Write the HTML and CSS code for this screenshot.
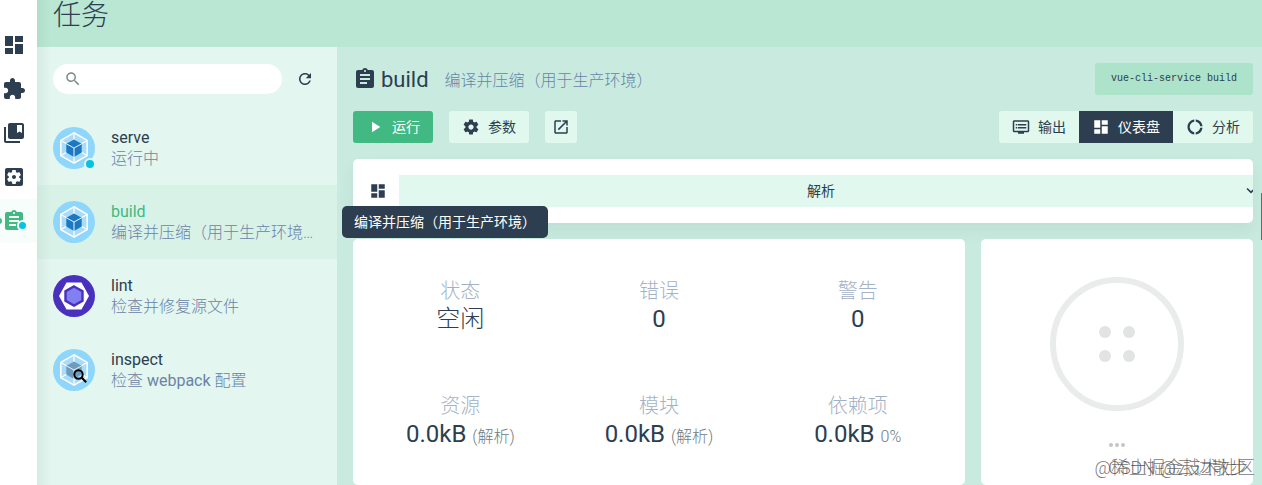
FILE: index.html
```html
<!DOCTYPE html>
<html lang="zh-CN">
<head>
    <meta charset="UTF-8">
    <meta name="viewport" content="width=device-width, initial-scale=1.0">
    <title>任务</title>
    <link rel="stylesheet" href="styles.css">
</head>
<body>
    <!-- icon sprites -->
    <svg class="sprites" aria-hidden="true">
        <symbol id="i-dashboard" viewBox="0 0 24 24"><path d="M3 13h8V3H3v10zm0 8h8v-6H3v6zm10 0h8V11h-8v10zm0-18v6h8V3h-8z"/></symbol>
        <symbol id="i-extension" viewBox="0 0 24 24"><path d="M20.5 11H19V7c0-1.1-.9-2-2-2h-4V3.5C13 2.12 11.88 1 10.5 1S8 2.12 8 3.5V5H4c-1.1 0-1.99.9-1.99 2v3.8H3.5c1.49 0 2.7 1.21 2.7 2.7s-1.21 2.7-2.7 2.7H2V20c0 1.1.9 2 2 2h3.8v-1.5c0-1.49 1.21-2.7 2.7-2.7 1.49 0 2.7 1.21 2.7 2.7V22H17c1.1 0 2-.9 2-2v-4h1.5c1.38 0 2.5-1.12 2.5-2.5S21.88 11 20.5 11z"/></symbol>
        <symbol id="i-collections" viewBox="0 0 24 24"><path d="M4 6H2v14c0 1.1.9 2 2 2h14v-2H4V6z"/><path d="M20 2H8c-1.1 0-2 .9-2 2v12c0 1.1.9 2 2 2h12c1.1 0 2-.9 2-2V4c0-1.1-.9-2-2-2zm0 10l-2.5-1.5L15 12V4h5v8z"/></symbol>
        <symbol id="i-config" viewBox="0 0 24 24"><path d="M12 10c-1.1 0-2 .9-2 2s.9 2 2 2 2-.9 2-2-.9-2-2-2zm7-7H5c-1.11 0-2 .9-2 2v14c0 1.1.89 2 2 2h14c1.11 0 2-.9 2-2V5c0-1.1-.89-2-2-2zm-1.75 9c0 .23-.02.46-.05.68l1.48 1.16c.13.11.17.3.08.45l-1.4 2.42c-.09.15-.27.21-.43.15l-1.74-.7c-.36.28-.76.51-1.18.69l-.26 1.85c-.03.17-.18.3-.35.3h-2.8c-.17 0-.32-.13-.35-.29l-.26-1.85c-.43-.18-.82-.41-1.18-.69l-1.74.7c-.16.06-.34 0-.43-.15l-1.4-2.42c-.09-.15-.05-.34.08-.45l1.48-1.16c-.03-.23-.05-.46-.05-.69 0-.23.02-.46.05-.68l-1.48-1.16c-.13-.11-.17-.3-.08-.45l1.4-2.42c.09-.15.27-.21.43-.15l1.74.7c.36-.28.76-.51 1.18-.69l.26-1.85c.03-.17.18-.3.35-.3h2.8c.17 0 .32.13.35.29l.26 1.85c.43.18.82.41 1.18.69l1.74-.7c.16-.06.34 0 .43.15l1.4 2.42c.09.15.05.34-.08.45l-1.48 1.16c.03.23.05.46.05.69z"/></symbol>
        <symbol id="i-assignment" viewBox="0 0 24 24"><path d="M19 3h-4.18C14.4 1.84 13.3 1 12 1c-1.3 0-2.4.84-2.82 2H5c-1.1 0-2 .9-2 2v14c0 1.1.9 2 2 2h14c1.1 0 2-.9 2-2V5c0-1.1-.9-2-2-2zm-7 0c.55 0 1 .45 1 1s-.45 1-1 1-1-.45-1-1 .45-1 1-1zm2 14H7v-2h7v2zm3-4H7v-2h10v2zm0-4H7V7h10v2z"/></symbol>
        <symbol id="i-search" viewBox="0 0 24 24"><path d="M15.5 14h-.79l-.28-.27C15.41 12.59 16 11.11 16 9.5 16 5.91 13.09 3 9.5 3S3 5.91 3 9.5 5.91 16 9.5 16c1.61 0 3.09-.59 4.23-1.57l.27.28v.79l5 4.99L20.49 19l-4.99-5zm-6 0C7.01 14 5 11.99 5 9.5S7.01 5 9.5 5 14 7.01 14 9.5 11.99 14 9.5 14z"/></symbol>
        <symbol id="i-refresh" viewBox="0 0 24 24"><path d="M17.65 6.35C16.2 4.9 14.21 4 12 4c-4.42 0-7.99 3.58-7.99 8s3.57 8 7.99 8c3.73 0 6.84-2.55 7.73-6h-2.08c-.82 2.33-3.04 4-5.65 4-3.31 0-6-2.69-6-6s2.69-6 6-6c1.66 0 3.14.69 4.22 1.78L13 11h7V4l-2.35 2.35z"/></symbol>
        <symbol id="i-play" viewBox="0 0 24 24"><path d="M8 5v14l11-7z"/></symbol>
        <symbol id="i-settings" viewBox="0 0 24 24"><path d="M19.43 12.98c.04-.32.07-.64.07-.98s-.03-.66-.07-.98l2.11-1.65c.19-.15.24-.42.12-.64l-2-3.46c-.12-.22-.39-.3-.61-.22l-2.49 1c-.52-.4-1.08-.73-1.69-.98l-.38-2.65C14.46 2.18 14.25 2 14 2h-4c-.25 0-.46.18-.49.42l-.38 2.65c-.61.25-1.17.59-1.69.98l-2.49-1c-.23-.09-.49 0-.61.22l-2 3.46c-.13.22-.07.49.12.64l2.11 1.65c-.04.32-.07.65-.07.98s.03.66.07.98l-2.11 1.65c-.19.15-.24.42-.12.64l2 3.46c.12.22.39.3.61.22l2.49-1c.52.4 1.08.73 1.69.98l.38 2.65c.03.24.24.42.49.42h4c.25 0 .46-.18.49-.42l.38-2.65c.61-.25 1.17-.59 1.69-.98l2.49 1c.23.09.49 0 .61-.22l2-3.46c.12-.22.07-.49-.12-.64l-2.11-1.65zM12 15.5c-1.93 0-3.5-1.57-3.5-3.5s1.57-3.5 3.5-3.5 3.5 1.57 3.5 3.5-1.57 3.5-3.5 3.5z"/></symbol>
        <symbol id="i-open" viewBox="0 0 24 24"><path d="M19 19H5V5h7V3H5c-1.11 0-2 .9-2 2v14c0 1.1.89 2 2 2h14c1.1 0 2-.9 2-2v-7h-2v7zM14 3v2h3.59l-9.83 9.83 1.41 1.41L19 6.41V10h2V3h-7z"/></symbol>
        <symbol id="i-output" viewBox="0 0 24 24"><path d="M21 3H3c-1.1 0-2 .9-2 2v12c0 1.1.9 2 2 2h5v2h8v-2h5c1.1 0 1.99-.9 1.99-2L23 5c0-1.1-.9-2-2-2zm0 14H3V5h18v12zm-2-9H8v2h11V8zm0 4H8v2h11v-2zM7 8H5v2h2V8zm0 4H5v2h2v-2z"/></symbol>
        <symbol id="i-donut" viewBox="0 0 24 24"><path d="M11 5.08V2c-5 .5-9 4.81-9 10s4 9.5 9 10v-3.08c-3-.48-6-3.4-6-6.92s3-6.44 6-6.92zM18.97 11H22c-.47-5-4-8.53-9-9v3.08C16 5.51 18.54 8 18.97 11zM13 18.92V22c5-.47 8.53-4 9-9h-3.03c-.43 3-2.97 5.49-5.97 5.92z"/></symbol>
        <symbol id="i-down" viewBox="0 0 24 24"><path d="M7.41 7.84L12 12.42l4.59-4.58L18 9.25l-6 6-6-6z"/></symbol>
        <symbol id="i-webpack" viewBox="0 0 42 42">
            <circle cx="21" cy="21" r="21" fill="#8ed6fb"/>
            <path d="M21 5.8l13.2 7.6v15.2L21 36.2 7.8 28.600V13.400z" fill="#a9dcf9" stroke="#fff" stroke-width="1.6"/>
            <path d="M21 6v7M34 13.500l-5.500 3.200M34 28.500l-5.500-3.200M21 36v-7M8 28.500l5.500-3.200M8 13.500l5.500 3.200" stroke="#fff" stroke-width="1.200"/>
            <path d="M21 12.500l7.700 4.300v8.800L21 30l-7.700-4.400v-8.800z"/>
            <path d="M13.300 16.800L21 21l7.700-4.200M21 21v9" fill="none" stroke="#e8f6fd" stroke-width="1"/>
        </symbol>
    </svg>

    <nav class="side-nav">
        <a href="#" aria-label="仪表盘"><svg class="icon-l"><use href="#i-dashboard"/></svg></a>
        <a href="#" aria-label="插件"><svg class="icon-l"><use href="#i-extension"/></svg></a>
        <a href="#" aria-label="依赖"><svg class="icon-l"><use href="#i-collections"/></svg></a>
        <a href="#" aria-label="配置"><svg class="icon-l"><use href="#i-config"/></svg></a>
        <a href="#" class="active" aria-label="任务"><svg class="icon-l"><use href="#i-assignment"/></svg><span class="nav-dot"></span></a>
    </nav>

    <div class="page">
        <header class="page-header"><h1>任务</h1></header>
        <div class="page-body">
            <aside class="task-list">
                <div class="list-tools">
                    <label class="search">
                        <svg class="icon"><use href="#i-search"/></svg>
                        <input type="text" aria-label="搜索">
                    </label>
                    <button class="refresh" aria-label="刷新"><svg class="icon"><use href="#i-refresh"/></svg></button>
                </div>
                <a href="#" class="task">
                    <span class="task-icon"><svg><use href="#i-webpack"/></svg><span class="status-dot"></span></span>
                    <span class="task-info"><span class="task-name">serve</span><span class="task-desc">运行中</span></span>
                </a>
                <a href="#" class="task selected">
                    <span class="task-icon"><svg><use href="#i-webpack"/></svg></span>
                    <span class="task-info"><span class="task-name">build</span><span class="task-desc">编译并压缩（用于生产环境）</span></span>
                </a>
                <a href="#" class="task">
                    <span class="task-icon">
                        <svg viewBox="0 0 42 42">
                            <circle cx="21" cy="21" r="21" fill="#4930bd"/>
                            <path d="M13.500 7.500h15L36 21l-7.500 13.500h-15L6 21z" fill="#fff"/>
                            <path d="M21 11.500l8.500 4.800v9.400L21 30.500l-8.500-4.800v-9.400z" fill="#8080f2" stroke="#4930bd" stroke-width="2.400"/>
                        </svg>
                    </span>
                    <span class="task-info"><span class="task-name">lint</span><span class="task-desc">检查并修复源文件</span></span>
                </a>
                <a href="#" class="task inspect">
                    <span class="task-icon">
                        <svg><use href="#i-webpack"/></svg>
                        <svg class="magnifier" viewBox="0 0 14 14"><circle cx="5.500" cy="5.500" r="4.200"/><path d="M8.500 8.500l4.700 4.700"/></svg>
                    </span>
                    <span class="task-info"><span class="task-name">inspect</span><span class="task-desc">检查 <span class="latin">webpack</span> 配置</span></span>
                </a>
            </aside>

            <main class="content">
                <div class="title-row">
                    <svg class="icon-l"><use href="#i-assignment"/></svg>
                    <h2>build</h2>
                    <span class="subtitle">编译并压缩（用于生产环境）</span>
                    <code class="command">vue-cli-service build</code>
                </div>
                <div class="actions">
                    <button class="btn primary"><svg class="icon"><use href="#i-play"/></svg>运行</button>
                    <button class="btn"><svg class="icon"><use href="#i-settings"/></svg>参数</button>
                    <button class="btn square" aria-label="打开"><svg class="icon"><use href="#i-open"/></svg></button>
                    <div class="tabs">
                        <button class="btn"><svg class="icon"><use href="#i-output"/></svg>输出</button>
                        <button class="btn current"><svg class="icon"><use href="#i-dashboard"/></svg>仪表盘</button>
                        <button class="btn"><svg class="icon"><use href="#i-donut"/></svg>分析</button>
                    </div>
                </div>

                <div class="card mode-bar">
                    <svg class="icon"><use href="#i-dashboard"/></svg>
                    <div class="mode-select">
                        <select aria-label="大小类型"><option>解析</option></select>
                        <svg class="icon"><use href="#i-down"/></svg>
                    </div>
                </div>

                <div class="dashboard">
                    <section class="card stats">
                        <div class="stat"><div class="label">状态</div><div class="value idle">空闲</div></div>
                        <div class="stat"><div class="label">错误</div><div class="value">0</div></div>
                        <div class="stat"><div class="label">警告</div><div class="value">0</div></div>
                        <div class="stat"><div class="label">资源</div><div class="value">0.0kB <small>(解析)</small></div></div>
                        <div class="stat"><div class="label">模块</div><div class="value">0.0kB <small>(解析)</small></div></div>
                        <div class="stat"><div class="label">依赖项</div><div class="value">0.0kB <small>0%</small></div></div>
                    </section>
                    <section class="card progress">
                        <svg class="ring" viewBox="0 0 134 134">
                            <circle cx="67" cy="67" r="64" fill="none" stroke="#eaecec" stroke-width="6"/>
                            <g fill="#e2e3e3"><circle cx="55" cy="55" r="6"/><circle cx="79" cy="55" r="6"/><circle cx="55" cy="79" r="6"/><circle cx="79" cy="79" r="6"/></g>
                        </svg>
                        <svg class="dots" viewBox="0 0 16 4"><circle cx="2" cy="2" r="2"/><circle cx="8" cy="2" r="2"/><circle cx="14" cy="2" r="2"/></svg>
                    </section>
                </div>
            </main>
        </div>
    </div>

    <div class="tooltip" role="tooltip">编译并压缩（用于生产环境）</div>
    <div class="watermark">@稀土掘金技术社区</div>
    <div class="watermark author">CSDN @云边散步</div>
    <div class="scroll-thumb"></div>
</body>
</html>
```
FILE: styles.css
```css
* {
    box-sizing: border-box;
}
body {
    margin: 0;
    height: 100vh;
    display: flex;
    overflow: hidden;
    position: relative;
    font-family: Roboto, "Noto Sans CJK SC", sans-serif;
    font-size: 16px;
    font-weight: 300;
    color: #2c3e50;
    background: #fff;
}
a {
    color: inherit;
    text-decoration: none;
}
button, select, input {
    font: inherit;
    color: inherit;
    border: none;
    background: none;
    padding: 0;
    margin: 0;
}
button {
    cursor: pointer;
}
svg {
    fill: currentColor;
    flex: none;
    display: block;
}
.sprites {
    position: absolute;
    width: 0;
    height: 0;
}
.icon {
    width: 18px;
    height: 18px;
}
.icon-l {
    width: 24px;
    height: 24px;
}

/* left navigation */
.side-nav {
    width: 37px;
    flex: none;
    padding-top: 23px;
}
.side-nav a {
    position: relative;
    display: flex;
    align-items: center;
    height: 44px;
    padding-left: 2px;
}
.side-nav .active {
    color: #42b983;
    background: #f6fdfa;
}
.side-nav .active::before {
    content: "";
    position: absolute;
    left: -4px;
    top: 19px;
    width: 6px;
    height: 6px;
    border-radius: 50%;
    background: #42b983;
}
.nav-dot {
    position: absolute;
    left: 17px;
    top: 21px;
    width: 11px;
    height: 11px;
    border: 2px solid #f6fdfa;
    border-radius: 50%;
    background: #03c2e6;
}

.page {
    flex: 1;
    min-width: 0;
    display: flex;
    flex-direction: column;
    background: #c9ebdf;
}
.page-header {
    height: 47px;
    padding: 0 16px;
    background: linear-gradient(to right, rgba(0, 60, 30, .05), transparent 14px) #bae6d4;
}
h1 {
    margin: 0;
    font-size: 28px;
    font-weight: 300;
    line-height: 32px;
}
.page-body {
    flex: 1;
    min-height: 0;
    display: flex;
}

/* task list */
.task-list {
    width: 300px;
    flex: none;
    background: linear-gradient(to right, rgba(0, 60, 30, .06), transparent 14px) #e3f6ef;
}
.list-tools {
    display: flex;
    align-items: center;
    gap: 14px;
    height: 64px;
    padding: 0 23px 0 16px;
}
.search {
    flex: 1;
    min-width: 0;
    display: flex;
    align-items: center;
    gap: 8px;
    height: 30px;
    padding: 0 11px;
    border-radius: 15px;
    background: #fff;
    color: #7f8c8d;
}
.search input {
    flex: 1;
    min-width: 0;
    outline: none;
}
.task {
    display: flex;
    align-items: center;
    gap: 16px;
    height: 74px;
    padding: 0 20px 0 16px;
}
.task.selected {
    background: rgba(66, 185, 131, .06);
}
.task-icon {
    position: relative;
    width: 42px;
    height: 42px;
    flex: none;
    color: #1c78c0;
}
.task-icon svg {
    width: 42px;
    height: 42px;
}
.inspect .task-icon {
    color: #6f9bbd;
}
.status-dot {
    position: absolute;
    right: -1px;
    bottom: -1px;
    width: 12px;
    height: 12px;
    border: 2px solid #e3f6ef;
    border-radius: 50%;
    background: #03c2e6;
}
.task-icon .magnifier {
    position: absolute;
    left: 20px;
    top: 20px;
    width: 14px;
    height: 14px;
    fill: none;
    stroke: #000;
    stroke-width: 2;
}
.task-info {
    min-width: 0;
    line-height: 21px;
}
.task-name, .task-desc {
    display: block;
    overflow: hidden;
    white-space: nowrap;
    text-overflow: ellipsis;
}
.task-name, .latin {
    font-weight: 400;
}
.task-desc {
    color: #6b83a8;
}
.selected .task-name {
    color: #42b983;
}

/* task details */
.content {
    flex: 1;
    min-width: 0;
    display: flex;
    flex-direction: column;
    gap: 16px;
    padding: 16px 9px 0 16px;
}
.title-row {
    display: flex;
    align-items: center;
    height: 32px;
}
h2 {
    margin: 0 16px 0 4px;
    font-size: 22px;
    font-weight: 400;
}
.subtitle {
    color: #6b83a8;
    line-height: 24px;
    padding-top: 4px;
}
.command {
    margin-left: auto;
    padding: 0 16px;
    border-radius: 3px;
    background: #ade2cb;
    font-family: "Liberation Mono", monospace;
    font-size: 10px;
    font-weight: 400;
    line-height: 32px;
}
.actions {
    display: flex;
    gap: 16px;
}
.btn {
    display: flex;
    align-items: center;
    justify-content: center;
    gap: 8px;
    height: 32px;
    padding: 0 13px;
    border-radius: 3px;
    background: #e0f8ed;
    font-size: 14px;
    font-weight: 400;
    line-height: 20px;
}
.btn.primary {
    background: #42b983;
    color: #fff;
}
.btn.square {
    width: 32px;
    padding: 0;
}
.tabs {
    display: flex;
    margin-left: auto;
    border-radius: 3px;
    overflow: hidden;
}
.tabs .btn {
    border-radius: 0;
}
.tabs .current {
    background: #2c3e50;
    color: #fff;
}

.card {
    border-radius: 5px;
    background: #fff;
}
.mode-bar {
    display: flex;
    align-items: center;
    gap: 12px;
    padding: 16px 0 16px 16px;
    overflow: hidden;
    box-shadow: 0 8px 16px rgba(0, 40, 20, .06);
}
.mode-select {
    position: relative;
    flex: 1;
    overflow: hidden;
}
.mode-select select {
    display: block;
    width: 100%;
    height: 32px;
    padding-right: 10px;
    border-radius: 0;
    background: #e0f8ed;
    font-size: 14px;
    font-weight: 400;
    text-align-last: center;
    appearance: none;
}
.mode-select svg {
    position: absolute;
    right: -7px;
    top: 7px;
    pointer-events: none;
}
.dashboard {
    flex: 1;
    display: flex;
    gap: 16px;
}
.stats {
    flex: 1;
    display: grid;
    grid-template-columns: repeat(3, 1fr);
    grid-auto-rows: 115px;
    padding: 8px;
}
.stat {
    display: flex;
    flex-direction: column;
    align-items: center;
    justify-content: center;
}
.label {
    font-size: 20px;
    line-height: 28px;
    color: #a3b2c6;
}
.value {
    font-size: 24px;
    font-weight: 400;
    line-height: 28px;
}
.value.idle {
    font-weight: 300;
}
.value small {
    font-size: 16px;
    font-weight: 300;
    line-height: 16px;
    color: #6f7c80;
}
.progress {
    width: 272px;
    display: flex;
    flex-direction: column;
    align-items: center;
    gap: 32px;
    padding-top: 38px;
}
.ring {
    width: 134px;
    height: 134px;
}
.dots {
    width: 16px;
    height: 4px;
    fill: #c4c6c6;
}

/* overlays */
.tooltip {
    position: absolute;
    left: 342px;
    top: 206px;
    padding: 0 12px;
    border-radius: 5px;
    background: #2c3e50;
    color: #fff;
    font-size: 14px;
    font-weight: 400;
    line-height: 32px;
}
.watermark {
    position: absolute;
    right: 7px;
    bottom: 5px;
    font-size: 18px;
    line-height: 24px;
    color: rgba(60, 60, 60, .7);
}
.watermark.author {
    right: 14px;
}
.scroll-thumb {
    position: absolute;
    right: 0;
    top: 193px;
    width: 1px;
    height: 47px;
    background: #5f6f6a;
}
```
